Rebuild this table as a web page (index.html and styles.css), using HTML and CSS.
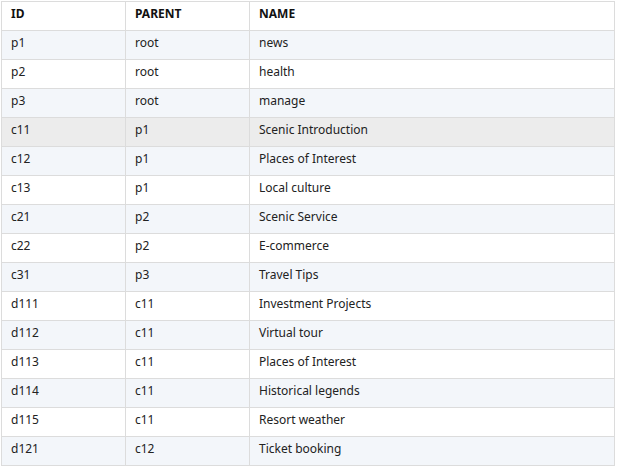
FILE: index.html
```html
<!DOCTYPE html>
<html>
<head>
<meta charset="utf-8">
<link rel="stylesheet" href="styles.css">
</head>
<body>
<table class="grid">
  <colgroup>
    <col class="c-id">
    <col class="c-parent">
    <col class="c-name">
  </colgroup>
  <thead>
    <tr><th>ID</th><th>PARENT</th><th>NAME</th></tr>
  </thead>
  <tbody>
    <tr><td>p1</td><td>root</td><td>news</td></tr>
    <tr><td>p2</td><td>root</td><td>health</td></tr>
    <tr><td>p3</td><td>root</td><td>manage</td></tr>
    <tr class="hover"><td>c11</td><td>p1</td><td>Scenic Introduction</td></tr>
    <tr><td>c12</td><td>p1</td><td>Places of Interest</td></tr>
    <tr><td>c13</td><td>p1</td><td>Local culture</td></tr>
    <tr><td>c21</td><td>p2</td><td>Scenic Service</td></tr>
    <tr><td>c22</td><td>p2</td><td>E-commerce</td></tr>
    <tr><td>c31</td><td>p3</td><td>Travel Tips</td></tr>
    <tr><td>d111</td><td>c11</td><td>Investment Projects</td></tr>
    <tr><td>d112</td><td>c11</td><td>Virtual tour</td></tr>
    <tr><td>d113</td><td>c11</td><td>Places of Interest</td></tr>
    <tr><td>d114</td><td>c11</td><td>Historical legends</td></tr>
    <tr><td>d115</td><td>c11</td><td>Resort weather</td></tr>
    <tr><td>d121</td><td>c12</td><td>Ticket booking</td></tr>
  </tbody>
</table>
</body>
</html>
```
FILE: styles.css
```css
html, body {
  margin: 0;
  padding: 0;
  background: #fff;
}
body {
  padding: 1px 0 0 1px;
  font-family: "Noto Sans", "DejaVu Sans", sans-serif;
  font-size: 12px;
  color: #222;
}
.grid {
  border-collapse: collapse;
  table-layout: fixed;
  width: 614px;
}
.c-id, .c-parent { width: 124px; }
.grid th, .grid td {
  border: 1px solid #dcdcdc;
  height: 29px;
  padding: 0 0 5px 9px;
  text-align: left;
  vertical-align: middle;
  box-sizing: border-box;
  line-height: 16px;
}
.grid th {
  font-weight: bold;
  color: #111;
}
.grid tbody tr:nth-child(odd) { background: #f3f6fa; }
.grid tbody tr.hover { background: #ececec; }
```
